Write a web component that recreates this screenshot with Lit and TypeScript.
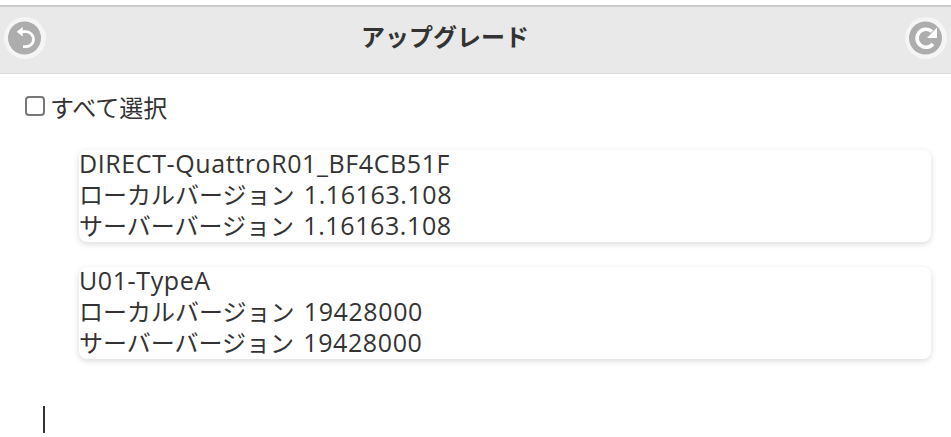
import { LitElement, html, css, svg } from 'lit';
import { customElement } from 'lit/decorators.js';

const devices = [
  { name: 'DIRECT-QuattroR01_BF4CB51F', local: '1.16163.108', server: '1.16163.108' },
  { name: 'U01-TypeA', local: '19428000', server: '19428000' },
];

@customElement('app-root')
export class AppRoot extends LitElement {
  static styles = css`
    :host {
      display: block;
      height: 437px;
      overflow: hidden;
      background: #fff;
      color: #333;
      font-family: 'Open Sans', 'Noto Sans CJK JP', sans-serif;
      padding-top: 5px;
      box-sizing: border-box;
    }
    .header {
      box-sizing: border-box;
      height: 69px;
      border-top: 2px solid #ccc;
      border-bottom: 1px solid #ddd;
      background: #e9e9e9;
      display: flex;
      align-items: flex-start;
      padding: 10px 4px 0;
    }
    .header h1 {
      flex: 1;
      margin: 0;
      text-align: center;
      font-size: 24px;
      font-weight: 700;
      line-height: 40px;
      padding-right: 61px;
    }
    .round {
      flex: none;
      width: 42px;
      height: 42px;
      display: block;
    }
    .select-all {
      display: flex;
      align-items: center;
      margin: 17px 0 0 25px;
      height: 30px;
      font-size: 24px;
    }
    .box {
      width: 20px;
      height: 20px;
      box-sizing: border-box;
      border: 2px solid #777;
      border-radius: 4px;
      margin-right: 5px;
    }
    .list {
      display: flex;
      flex-direction: column;
      gap: 25px;
      margin: 29px 20px 0 79px;
    }
    .card {
      border-radius: 8px;
      background: #fff;
      box-shadow: 0 2px 6px rgba(0, 0, 0, 0.15);
      font-size: 24px;
      line-height: 31px;
      height: 92px;
      white-space: nowrap;
    }
    .latin {
      font-size: 25px;
      letter-spacing: 0.6px;
    }
    .version {
      margin-left: 3px;
    }
    .text {
      display: block;
      margin-top: -2px;
    }
    .cursor {
      width: 2px;
      height: 27px;
      background: #333;
      margin: 47px 0 0 43px;
    }
  `;

  private icon(back: boolean) {
    return html`<svg class="round" viewBox="0 0 42 42">
      <circle cx="21" cy="21" r="21" fill="#f5f5f5"></circle>
      <circle cx="20.5" cy="21" r="16.5" fill="#adadad"></circle>
      ${back
        ? svg`<path d="M17.5 14.7 H22 A7.5 7.5 0 0 1 22 29.7 H19" fill="none" stroke="#fff" stroke-width="2.8"></path>
            <path d="M18.7 10 L12.7 14.7 L18.7 19.4 Z" fill="#fff"></path>`
        : svg`<path d="M28 27 A9 9 0 1 1 27 14.5" fill="none" stroke="#fff" stroke-width="3.6"></path>
            <path d="M32 10.5 V21 H22 Z" fill="#fff"></path>`}
    </svg>`;
  }

  render() {
    return html`
      <div class="header">
        ${this.icon(true)}
        <h1>アップグレード</h1>
        ${this.icon(false)}
      </div>
      <label class="select-all"><span class="box"></span>すべて選択</label>
      <div class="list">
        ${devices.map(
          (d) => html`<div class="card">
            <span class="text"
              ><span class="latin">${d.name}</span><br />ローカルバージョン
              <span class="latin version">${d.local}</span><br />サーバーバージョン
              <span class="latin version">${d.server}</span></span
            >
          </div>`
        )}
      </div>
      <div class="cursor"></div>
    `;
  }
}
